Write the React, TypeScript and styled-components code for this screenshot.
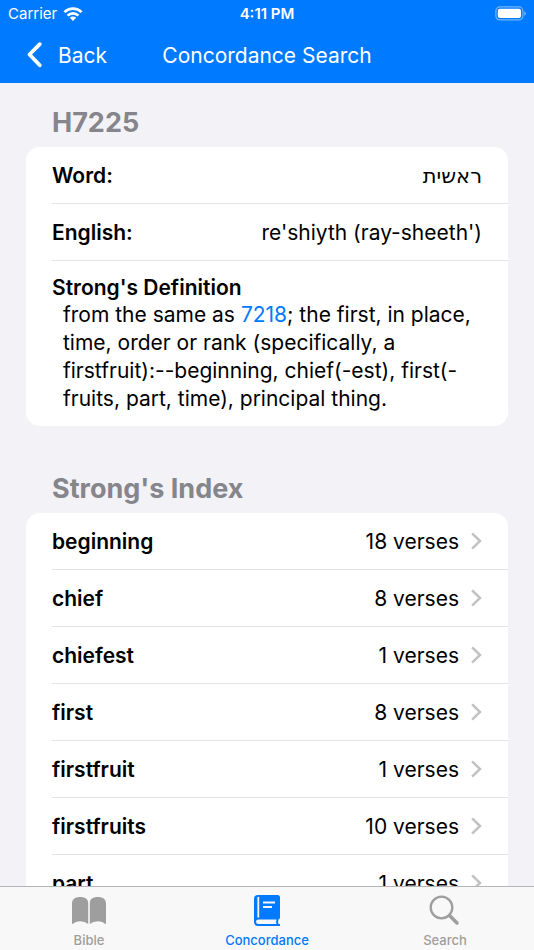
import React from "react";
import styled, { createGlobalStyle, css } from "styled-components";

const Global = createGlobalStyle`
  *, *::before, *::after { box-sizing: border-box; }
  html, body, #root { margin: 0; height: 100%; }
  body {
    background: #f2f2f7;
    color: #000;
    font-family: Inter, "Noto Sans", "DejaVu Sans", sans-serif;
    font-size: 21px;
    overflow: hidden;
  }
`;

const Screen = styled.div`
  display: flex;
  flex-direction: column;
  height: 100vh;
`;

const Header = styled.header`
  flex: none;
  background: #007aff;
  color: #fff;
`;

const StatusBar = styled.div`
  display: grid;
  grid-template-columns: 1fr auto 1fr;
  align-items: center;
  height: 27px;
  padding: 0 8px;
  font-size: 15px;
`;

const Carrier = styled.div`
  display: flex;
  align-items: center;
  gap: 6px;
`;

const Clock = styled.time`
  font-weight: 600;
`;

const BatterySlot = styled.div`
  display: flex;
  justify-content: flex-end;
`;

const NavBar = styled.nav`
  display: grid;
  grid-template-columns: 1fr auto 1fr;
  align-items: center;
  height: 56px;
  padding: 0 26px;
`;

const BackButton = styled.button`
  display: flex;
  align-items: center;
  justify-self: start;
  gap: 14px;
  padding: 0;
  border: 0;
  background: none;
  color: inherit;
  font: inherit;
  cursor: pointer;
`;

const Title = styled.h1`
  margin: 0;
  font-size: 21px;
  font-weight: 400;
`;

const Content = styled.main`
  flex: 1;
  min-height: 0;
  overflow: hidden;
  padding: 0 26px;
`;

const Section = styled.section`
  padding-top: 21px;
  margin-bottom: 23px;
`;

const SectionTitle = styled.h2`
  margin: 0 0 5px;
  padding-left: 26px;
  color: #85858b;
  font-size: 27px;
  font-weight: 700;
  line-height: 38px;
`;

const Card = styled.div`
  overflow: hidden;
  border-radius: 14px;
  background: #fff;
  padding-left: 26px;
`;

const rowLayout = css`
  display: flex;
  align-items: center;
  justify-content: space-between;
  width: 100%;
  height: 57px;
  padding: 0 26px 0 0;
  border-bottom: 1px solid #e2e2e4;
`;

const Fact = styled.div`
  ${rowLayout}
`;

const IndexLink = styled.a`
  ${rowLayout}
  color: inherit;
  text-decoration: none;
`;

const Label = styled.span`
  font-weight: 600;
`;

const Count = styled.span`
  display: flex;
  align-items: center;
  gap: 12px;
`;

const Definition = styled.div`
  padding: 14px 26px 13px 0;
`;

const DefinitionTitle = styled.h3`
  margin: 0;
  font-size: 21px;
  font-weight: 600;
  line-height: 26px;
`;

const DefinitionText = styled.p`
  margin: 0;
  padding-left: 11px;
  line-height: 28px;
`;

const Reference = styled.a`
  color: #007aff;
  text-decoration: none;
`;

const TabBar = styled.nav`
  display: grid;
  grid-template-columns: repeat(3, 1fr);
  flex: none;
  height: 64px;
  border-top: 1px solid #b5b5b8;
  background: #f8f8f8;
`;

const Tab = styled.button<{ $active?: boolean }>`
  display: flex;
  flex-direction: column;
  align-items: center;
  gap: 3px;
  padding: 6px 0 0;
  border: 0;
  background: none;
  color: ${(p) => (p.$active ? "#007aff" : "#9e9e9e")};
  font: inherit;
  font-size: 13px;
  font-weight: 500;
  line-height: 16px;
  cursor: pointer;
`;

const WifiIcon = () => (
  <svg width="20" height="14" viewBox="0 0 20 14" aria-hidden="true">
    <path d="M10 14 6.8 10.7a4.6 4.6 0 0 1 6.4 0Z" fill="#fff" />
    <path d="M4.6 8.6a7.7 7.7 0 0 1 10.8 0M1.4 5.1a12.4 12.4 0 0 1 17.2 0" fill="none" stroke="#fff" strokeWidth="2.7" />
  </svg>
);

const BatteryIcon = () => (
  <svg width="31" height="15" viewBox="0 0 31 15" role="img" aria-label="Battery full">
    <rect x="0.9" y="0.9" width="27" height="13" rx="4" fill="none" stroke="#fff" strokeOpacity="0.45" strokeWidth="1.2" />
    <rect x="2.8" y="2.8" width="23.2" height="9.2" rx="2" fill="#fff" />
    <path d="M29.3 5.2q1.6.6 1.6 2.3t-1.6 2.3Z" fill="#fff" fillOpacity="0.45" />
  </svg>
);

const BackIcon = () => (
  <svg width="18" height="28" viewBox="0 0 18 28" aria-hidden="true">
    <path d="M13.8 3.2 3.5 13.5l10.3 10.8" fill="none" stroke="#fff" strokeWidth="3.8" strokeLinecap="round" strokeLinejoin="round" />
  </svg>
);

const ChevronIcon = () => (
  <svg width="11" height="18" viewBox="0 0 11 18" aria-hidden="true">
    <path d="m2 2.2 7 6.8-7 6.8" fill="none" stroke="#c2c2c5" strokeWidth="2.5" strokeLinecap="square" />
  </svg>
);

const BibleIcon = () => (
  <svg width="36" height="36" viewBox="0 0 36 36" fill="currentColor" aria-hidden="true">
    <path d="M1 10.500C1 6 4.500 4 9.200 4s8 2 8 6V31Q14 28.300 9.200 28.300T2 31Q1 31.300 1 30Z" />
    <path d="M35 10.500C35 6 31.500 4 26.800 4s-8 2-8 6V31q3.200-2.700 8-2.700T34 31q1 .3 1-1Z" />
  </svg>
);

const ConcordanceIcon = () => (
  <svg width="36" height="36" viewBox="0 0 36 36" aria-hidden="true">
    <path d="M9 2H28.500q2.500 0 2.500 2.500v20q0 1.500-1.500 2-.8 2.500 0 4.500h1.500v2H9q-4 0-4-4V6Q5 2 9 2Z" fill="currentColor" />
    <path d="M9.500 26.500H27.500q-.8 2 0 4.500H9.500q-2.500 0-2.500-2.200t2.500-2.300Z" fill="#f8f8f8" />
    <path d="M9.300 4v20.500M14 9.500h12M14 14h9" fill="none" stroke="#f8f8f8" strokeWidth="1.800" />
  </svg>
);

const SearchIcon = () => (
  <svg width="36" height="36" viewBox="0 0 36 36" fill="none" stroke="currentColor" aria-hidden="true">
    <circle cx="14.500" cy="14.500" r="10.800" strokeWidth="2.300" />
    <path d="m22.500 22.500 7.500 7.500" strokeWidth="3.500" strokeLinecap="round" />
  </svg>
);

const entries = [
  { word: "beginning", verses: 18 },
  { word: "chief", verses: 8 },
  { word: "chiefest", verses: 1 },
  { word: "first", verses: 8 },
  { word: "firstfruit", verses: 1 },
  { word: "firstfruits", verses: 10 },
  { word: "part", verses: 1 },
];

export default function App() {
  return (
    <Screen>
      <Global />
      <Header>
        <StatusBar>
          <Carrier>
            Carrier <WifiIcon />
          </Carrier>
          <Clock>4:11 PM</Clock>
          <BatterySlot>
            <BatteryIcon />
          </BatterySlot>
        </StatusBar>
        <NavBar>
          <BackButton type="button">
            <BackIcon />
            Back
          </BackButton>
          <Title>Concordance Search</Title>
        </NavBar>
      </Header>
      <Content>
        <Section>
          <SectionTitle>H7225</SectionTitle>
          <Card>
            <Fact>
              <Label>Word:</Label>
              <span lang="he" dir="rtl">ראשית</span>
            </Fact>
            <Fact>
              <Label>English:</Label>
              <span>re'shiyth (ray-sheeth')</span>
            </Fact>
            <Definition>
              <DefinitionTitle>Strong's Definition</DefinitionTitle>
              <DefinitionText>
                from the same as <Reference href="#7218">7218</Reference>; the first, in place, time, order or rank
                (specifically, a firstfruit):--beginning, chief(-est), first(-fruits, part, time), principal thing.
              </DefinitionText>
            </Definition>
          </Card>
        </Section>
        <Section>
          <SectionTitle>Strong's Index</SectionTitle>
          <Card>
            {entries.map(({ word, verses }) => (
              <IndexLink key={word} href={`#${word}`}>
                <Label>{word}</Label>
                <Count>
                  {verses} verses
                  <ChevronIcon />
                </Count>
              </IndexLink>
            ))}
          </Card>
        </Section>
      </Content>
      <TabBar>
        <Tab type="button">
          <BibleIcon />
          Bible
        </Tab>
        <Tab type="button" $active aria-current="page">
          <ConcordanceIcon />
          Concordance
        </Tab>
        <Tab type="button">
          <SearchIcon />
          Search
        </Tab>
      </TabBar>
    </Screen>
  );
}
